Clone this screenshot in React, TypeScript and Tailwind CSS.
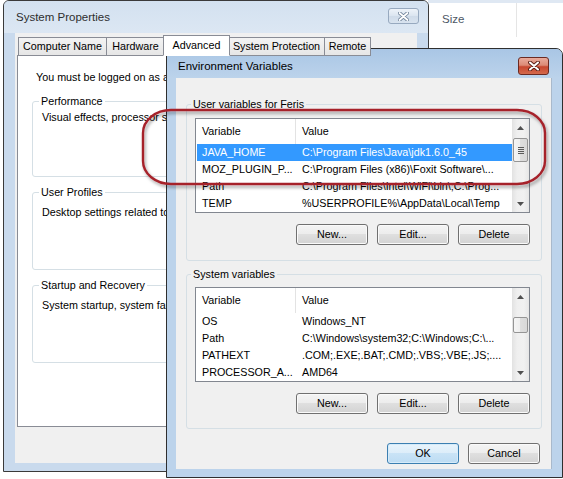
import React from "react";

const userRows: [string, string][] = [
  ["JAVA_HOME", "C:\\Program Files\\Java\\jdk1.6.0_45"],
  ["MOZ_PLUGIN_P...", "C:\\Program Files (x86)\\Foxit Software\\..."],
  ["Path", "C:\\Program Files\\Intel\\WiFi\\bin\\;C:\\Prog..."],
  ["TEMP", "%USERPROFILE%\\AppData\\Local\\Temp"],
];

const sysRows: [string, string][] = [
  ["OS", "Windows_NT"],
  ["Path", "C:\\Windows\\system32;C:\\Windows;C:\\..."],
  ["PATHEXT", ".COM;.EXE;.BAT;.CMD;.VBS;.VBE;.JS;...."],
  ["PROCESSOR_A...", "AMD64"],
];

function ScrollArrow({ up }: { up?: boolean }) {
  return (
    <div className="h-[17px] flex items-center justify-center">
      <svg width="7" height="4" viewBox="0 0 7 4">
        <path d={up ? "M0 4 L3.5 0 L7 4 Z" : "M0 0 L3.5 4 L7 0 Z"} fill="#505050" />
      </svg>
    </div>
  );
}

function ScrollBar({ big }: { big?: boolean }) {
  return (
    <div className="w-[17px] flex flex-col bg-[linear-gradient(to_right,#e2e2e2,#efefef_30%,#f1f1f1_70%,#e6e6e6)]">
      <ScrollArrow up />
      <div className="flex-1 flex flex-col items-center">
        {big ? (
          <div className="mt-[2px] h-[24px] w-[15px] rounded-[2px] border border-[#959595] bg-[linear-gradient(to_right,#f5f5f5,#eeeeee_50%,#dedede_50%,#d8d8d8)] flex flex-col items-center justify-center gap-[1px]">
            <div className="w-[6px] h-px bg-[#5a5a5a]" />
            <div className="w-[6px] h-px bg-[#5a5a5a]" />
            <div className="w-[6px] h-px bg-[#5a5a5a]" />
            <div className="w-[6px] h-px bg-[#5a5a5a]" />
          </div>
        ) : (
          <div className="mt-[12px] h-[16px] w-[15px] rounded-[2px] border border-[#959595] bg-[linear-gradient(to_right,#f5f5f5,#eeeeee_50%,#dedede_50%,#d8d8d8)]" />
        )}
      </div>
      <ScrollArrow />
    </div>
  );
}

function VarList({ rows, selected, big }: { rows: [string, string][]; selected?: number; big?: boolean }) {
  return (
    <div className="w-[335px] h-[95px] border border-[#828790] bg-white flex">
      <div className="flex-1 flex flex-col">
        <div className="h-[25px] flex items-stretch">
          <div className="w-[99px] pl-[6px] flex items-center">Variable</div>
          <div className="w-px bg-[#e3e3e3]" />
          <div className="flex-1 pl-[6px] flex items-center">Value</div>
        </div>
        {rows.map((r, i) => (
          <div
            key={i}
            className={
              i === selected
                ? "ml-px h-[17px] flex items-center bg-[#3399ff] text-white"
                : "ml-px h-[17px] flex items-center"
            }
          >
            <div className="w-[98px] pl-[5px] whitespace-nowrap overflow-hidden">{r[0]}</div>
            <div className="pl-[7px] whitespace-nowrap overflow-hidden">{r[1]}</div>
          </div>
        ))}
      </div>
      <ScrollBar big={big} />
    </div>
  );
}

function Btn({ label, def }: { label: string; def?: boolean }) {
  return (
    <div
      className={
        def
          ? "w-[72px] h-[21px] rounded-[3px] border border-[#3c7fb1] bg-[linear-gradient(to_bottom,#e8f4fc_0%,#dcedf9_50%,#c9e3f6_50%,#bddcf3_100%)] shadow-[inset_0_0_0_1px_#d6ebf9] flex items-center justify-center"
          : "w-[72px] h-[21px] rounded-[3px] border border-[#707070] bg-[linear-gradient(to_bottom,#f4f4f4_0%,#ececec_50%,#dfdfdf_50%,#d3d3d3_100%)] shadow-[inset_0_0_0_1px_#fafafa] flex items-center justify-center"
      }
    >
      {label}
    </div>
  );
}

function Tab({ label, cls }: { label: string; cls: string }) {
  return <div className={cls}>{label}</div>;
}

function SysProps() {
  return (
    <div className="absolute left-[3px] top-0 w-[426px] h-[472px] border border-[#3a3a3a] rounded-t-[6px] bg-[#c9daed] flex flex-col">
      <div className="h-[32px] flex items-start rounded-t-[5px] bg-[linear-gradient(to_bottom,#d3e1f0,#dce7f3)]">
        <div className="pl-[12px] pt-[9px] leading-[14px] text-[11.5px] text-[#2e2e2e]">System Properties</div>
        <div className="ml-auto mt-[7px] mr-[9px] w-[31px] h-[16px] rounded-[3px] border border-[#97a9bf] bg-[linear-gradient(to_bottom,#eef3f9,#dbe5f0_50%,#cfdbe9_50%,#d8e3ef)] flex items-center justify-center">
          <svg width="11" height="9" viewBox="0 0 11 9">
            <path d="M1.5 1 L9.5 8 M9.5 1 L1.5 8" stroke="#6f8299" strokeWidth="3.6" strokeLinecap="round" />
            <path d="M1.5 1 L9.5 8 M9.5 1 L1.5 8" stroke="#ffffff" strokeWidth="1.8" strokeLinecap="round" />
          </svg>
        </div>
      </div>
      <div className="mx-[11px] h-[430px] bg-[#f0f0f0] flex flex-col">
        <div className="relative z-10 mt-[2px] ml-[3px] h-[21px] flex items-end">
          <Tab label="Computer Name" cls="w-[89px] h-[19px] border border-[#898c95] bg-[linear-gradient(to_bottom,#f3f3f3,#e6e6e6)] flex items-center justify-center whitespace-nowrap" />
          <Tab label="Hardware" cls="-ml-px w-[59px] h-[19px] border border-[#898c95] bg-[linear-gradient(to_bottom,#f3f3f3,#e6e6e6)] flex items-center justify-center whitespace-nowrap" />
          <Tab label="Advanced" cls="relative z-20 -ml-[2px] w-[67px] h-[21px] border border-[#898c95] border-b-white bg-white flex items-center justify-center whitespace-nowrap" />
          <Tab label="System Protection" cls="-ml-[2px] w-[97px] h-[19px] border border-[#898c95] bg-[linear-gradient(to_bottom,#f3f3f3,#e6e6e6)] flex items-center justify-center whitespace-nowrap" />
          <Tab label="Remote" cls="-ml-px w-[47px] h-[19px] border border-[#898c95] bg-[linear-gradient(to_bottom,#f3f3f3,#e6e6e6)] flex items-center justify-center whitespace-nowrap" />
        </div>
        <div className="-mt-px ml-[2px] mr-[4px] h-[372px] border border-[#898c95] bg-white flex flex-col pl-[18px] pt-[14px]">
          <div className="leading-[14px] whitespace-nowrap">You must be logged on as a</div>
          <fieldset className="mt-[10px] -ml-[4px] w-[380px] h-[83px] border border-[#d5dfe5] rounded-[3px]">
            <legend className="ml-[6px] px-[2px] leading-[14px]">Performance</legend>
            <div className="mt-[2px] ml-[9px] leading-[14px] whitespace-nowrap">Visual effects, processor s</div>
          </fieldset>
          <fieldset className="mt-[8px] -ml-[4px] w-[380px] h-[85px] border border-[#d5dfe5] rounded-[3px]">
            <legend className="ml-[6px] px-[2px] leading-[14px]">User Profiles</legend>
            <div className="mt-[6px] ml-[9px] leading-[14px] whitespace-nowrap">Desktop settings related to</div>
          </fieldset>
          <fieldset className="mt-[8px] -ml-[4px] w-[380px] h-[85px] border border-[#d5dfe5] rounded-[3px]">
            <legend className="ml-[6px] px-[2px] leading-[14px]">Startup and Recovery</legend>
            <div className="mt-[6px] ml-[9px] leading-[14px] whitespace-nowrap">System startup, system failu</div>
          </fieldset>
        </div>
      </div>
    </div>
  );
}

function EnvDialog() {
  return (
    <div className="absolute left-[166px] top-[48px] w-[397px] h-[430px] border border-[#2f2f2f] rounded-t-[7px] bg-[#bcd3eb] flex flex-col">
      <div className="h-[29px] flex items-start rounded-t-[6px] bg-[linear-gradient(to_bottom,#a9c6e5,#bcd3eb)]">
        <div className="pl-[11px] pt-[10px] leading-[14px] text-[11.5px]">Environment Variables</div>
        <div className="ml-auto mt-[8px] mr-[13px] w-[31px] h-[18px] rounded-[3px] border border-[#6b2a22] bg-[linear-gradient(to_bottom,#e9ab9c,#dc8a76_45%,#c8472f_55%,#d46a4d)] flex items-center justify-center">
          <svg width="12" height="10" viewBox="0 0 12 10">
            <path d="M2 1.5 L10 8.5 M10 1.5 L2 8.5" stroke="#5a1d15" strokeWidth="3.8" strokeLinecap="round" />
            <path d="M2 1.5 L10 8.5 M10 1.5 L2 8.5" stroke="#ffffff" strokeWidth="2" strokeLinecap="round" />
          </svg>
        </div>
      </div>
      <div className="ml-[9px] w-[376px] h-[391px] bg-[#f0f0f0] border-r border-[#a9b9cb] flex flex-col">
        <fieldset className="mt-[19px] ml-[10px] w-[356px] border border-[#d5dfe5] rounded-[3px]">
          <legend className="ml-[4px] px-[2px] leading-[14px]">User variables for Feris</legend>
          <div className="pl-[8px] pr-[11px] pb-[15px] flex flex-col">
            <div className="mt-[7px]">
              <VarList rows={userRows} selected={0} big />
            </div>
            <div className="mt-[11px] flex justify-end gap-[9px]">
              <Btn label="New..." />
              <Btn label="Edit..." />
              <Btn label="Delete" />
            </div>
          </div>
        </fieldset>
        <fieldset className="mt-[6px] ml-[10px] w-[356px] border border-[#d5dfe5] rounded-[3px]">
          <legend className="ml-[4px] px-[2px] leading-[14px]">System variables</legend>
          <div className="pl-[8px] pr-[11px] pb-[14px] flex flex-col">
            <div className="mt-[6px]">
              <VarList rows={sysRows} />
            </div>
            <div className="mt-[11px] flex justify-end gap-[9px]">
              <Btn label="New..." />
              <Btn label="Edit..." />
              <Btn label="Delete" />
            </div>
          </div>
        </fieldset>
        <div className="mt-[14px] mr-[11px] flex justify-end gap-[9px]">
          <Btn label="OK" def />
          <Btn label="Cancel" />
        </div>
      </div>
    </div>
  );
}

export default function App() {
  return (
    <div className="relative w-[563px] h-[479px] overflow-hidden bg-white font-['Liberation_Sans',Arial,sans-serif] text-[10.75px] text-black">
      <div className="absolute left-[428px] top-0 w-[135px] h-[40px] flex flex-col">
        <div className="h-[3px] bg-[#dfe8f3]" />
        <div className="h-[34px] flex items-stretch">
          <div className="w-[88px] pl-[14px] flex items-center text-[11.5px] text-[#4d5766]">Size</div>
          <div className="w-px bg-[#e5e5e5]" />
        </div>
      </div>
      <SysProps />
      <EnvDialog />
      <svg className="absolute left-0 top-0 pointer-events-none" width="563" height="479" viewBox="0 0 563 479">
        <defs>
          <filter id="sh" x="-10%" y="-30%" width="120%" height="160%">
            <feDropShadow dx="1.5" dy="2.5" stdDeviation="1.6" floodColor="#000" floodOpacity="0.35" />
          </filter>
        </defs>
        <rect x="143" y="110" width="402" height="74" rx="28" ry="23" fill="none" stroke="#a6222c" strokeWidth="2.4" filter="url(#sh)" />
      </svg>
    </div>
  );
}
